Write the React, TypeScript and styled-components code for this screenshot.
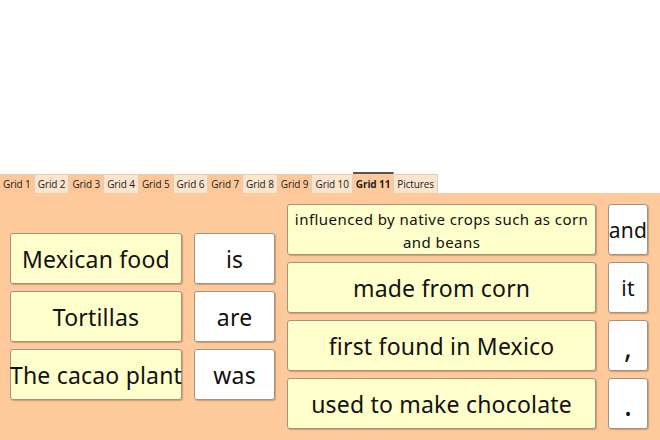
import styled, { createGlobalStyle } from "styled-components";

const GlobalStyle = createGlobalStyle`
  html, body {
    margin: 0;
    padding: 0;
    background: #ffffff;
  }
`;

const Page = styled.div`
  width: 660px;
  height: 440px;
  display: flex;
  flex-direction: column;
  overflow: hidden;
`;

const TopSpace = styled.div`
  height: 172px;
  flex: none;
`;

const TabBar = styled.div`
  display: flex;
  align-items: flex-end;
  height: 21px;
  flex: none;
`;

const Tab = styled.div<{ $light?: boolean; $active?: boolean }>`
  box-sizing: border-box;
  height: ${({ $active }) => ($active ? "21px" : "19px")};
  padding: 0 3px;
  display: flex;
  align-items: center;
  font-family: "Open Sans", "Noto Sans", sans-serif;
  font-size: 10px;
  font-weight: ${({ $active }) => ($active ? 700 : 400)};
  color: #222;
  letter-spacing: -0.1px;
  background: ${({ $light, $active }) =>
    $active ? "#fec99b" : $light ? "#fbe5cc" : "#fdc797"};
  border: 1px solid #e2cdb6;
  border-bottom: none;
  border-top: ${({ $active }) => ($active ? "2px solid #555" : "1px solid #e2cdb6")};
  border-left: none;
`;

const Panel = styled.div`
  flex: 1;
  background: #fec99b;
  display: flex;
  gap: 12px;
  padding: 11px 12px 0 10px;
`;

const Column = styled.div<{ $width: number }>`
  width: ${({ $width }) => $width}px;
  height: 225px;
  display: flex;
  flex-direction: column;
  justify-content: center;
  gap: 7px;
`;

const Card = styled.div<{ $white?: boolean; $size: number }>`
  box-sizing: border-box;
  height: 51px;
  display: flex;
  align-items: center;
  justify-content: center;
  text-align: center;
  padding: 2px 2px 0;
  background: ${({ $white }) => ($white ? "#ffffff" : "#ffffcc")};
  border: 1px solid #a39482;
  border-radius: 3px;
  box-shadow: 1px 1px 1px rgba(120, 80, 40, 0.35);
  font-family: "Noto Sans", "Open Sans", sans-serif;
  font-size: ${({ $size }) => $size}px;
  line-height: ${({ $size }) => ($size < 18 ? 1.5 : 1.1)};
  letter-spacing: ${({ $size }) => ($size < 18 ? "0.45px" : "0.2px")};
  color: #111;
  white-space: ${({ $size }) => ($size < 18 ? "normal" : "nowrap")};
`;

const tabs = [
  "Grid 1", "Grid 2", "Grid 3", "Grid 4", "Grid 5", "Grid 6",
  "Grid 7", "Grid 8", "Grid 9", "Grid 10", "Grid 11", "Pictures",
];

const subjects = ["Mexican food", "Tortillas", "The cacao plant"];
const verbs = ["is", "are", "was"];
const endings = [
  "influenced by native crops such as corn and beans",
  "made from corn",
  "first found in Mexico",
  "used to make chocolate",
];
const joins = ["and", "it", ",", "."];

export default function App() {
  return (
    <Page>
      <GlobalStyle />
      <TopSpace />
      <TabBar>
        {tabs.map((t, i) => (
          <Tab key={t} $light={i % 2 === 1} $active={t === "Grid 11"}>
            {t}
          </Tab>
        ))}
      </TabBar>
      <Panel>
        <Column $width={172}>
          {subjects.map((s) => (
            <Card key={s} $size={23}>{s}</Card>
          ))}
        </Column>
        <Column $width={82}>
          {verbs.map((v) => (
            <Card key={v} $white $size={23}>{v}</Card>
          ))}
        </Column>
        <Column $width={312}>
          {endings.map((e, i) => (
            <Card key={e} $size={i === 0 ? 15 : 23}>{e}</Card>
          ))}
        </Column>
        <Column $width={40}>
          {joins.map((j) => (
            <Card key={j} $white $size={j.length > 1 ? 21 : 30}>{j}</Card>
          ))}
        </Column>
      </Panel>
    </Page>
  );
}
